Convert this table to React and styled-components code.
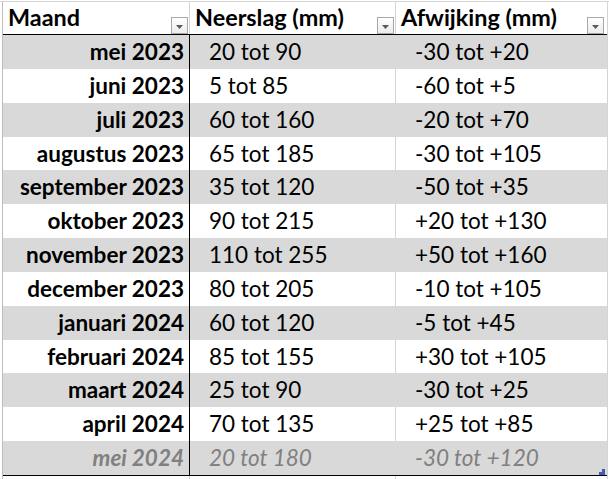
import styled, { createGlobalStyle } from "styled-components";

const rows = [
  ["mei 2023", "20 tot 90", "-30 tot +20"],
  ["juni 2023", "5 tot 85", "-60 tot +5"],
  ["juli 2023", "60 tot 160", "-20 tot +70"],
  ["augustus 2023", "65 tot 185", "-30 tot +105"],
  ["september 2023", "35 tot 120", "-50 tot +35"],
  ["oktober 2023", "90 tot 215", "+20 tot +130"],
  ["november 2023", "110 tot 255", "+50 tot +160"],
  ["december 2023", "80 tot 205", "-10 tot +105"],
  ["januari 2024", "60 tot 120", "-5 tot +45"],
  ["februari 2024", "85 tot 155", "+30 tot +105"],
  ["maart 2024", "25 tot 90", "-30 tot +25"],
  ["april 2024", "70 tot 135", "+25 tot +85"],
  ["mei 2024", "20 tot 180", "-30 tot +120", true],
];

const GlobalStyle = createGlobalStyle`
  body {
    margin: 0;
    background: #ffffff;
    font-family: Lato, "Liberation Sans", sans-serif;
  }
`;

// knopje met het filter-pijltje in de kop
function FilterButton() {
  return (
    <StyledFilter>
      <svg width="7" height="4" viewBox="0 0 7 4">
        <polygon points="0,0 7,0 3.5,4" fill="#5a5a5a" />
      </svg>
    </StyledFilter>
  );
}

export default function App() {
  return (
    <>
      <GlobalStyle />
      <Sheet>
        <Table>
          <HeaderRow>
            <HeaderCell $gridline="#d4d4d4">
              Maand
              <FilterButton />
            </HeaderCell>
            <HeaderCell $gridline="#d4d4d4">
              Neerslag (mm)
              <FilterButton />
            </HeaderCell>
            <HeaderCell $gridline="transparent">
              Afwijking (mm)
              <FilterButton />
            </HeaderCell>
          </HeaderRow>
          <Body>
            {rows.map((row, index) => {
              const striped = index % 2 === 0;
              const last = index === rows.length - 1;
              return (
                <Row key={row[0]} $striped={striped} $muted={row[3]}>
                  <MonthCell>{row[0]}</MonthCell>
                  <ValueCell $gridline={striped ? "#d9d9d9" : "#d4d4d4"}>
                    {row[1]}
                  </ValueCell>
                  <ValueCell $gridline="transparent">
                    {row[2]}
                    {last && <ResizeHandle />}
                  </ValueCell>
                </Row>
              );
            })}
          </Body>
          <Filler>
            <span />
            <span />
            <span />
          </Filler>
        </Table>
      </Sheet>
    </>
  );
}

const Sheet = styled.div`
  margin-top: 1px;
  border-top: 1px solid #d4d4d4;
  width: 609px;
  height: 477px;
  overflow: hidden;
`;

const Table = styled.div`
  margin-left: 2px;
  width: 604px;
  border-left: 1px solid #bdbdbd;
  border-right: 1px solid #d4d4d4;
`;

const HeaderRow = styled.div`
  display: grid;
  grid-template-columns: 187px 206px 210px;
  height: 32px;
  border-bottom: 1px solid #000;
`;

const HeaderCell = styled.div`
  display: flex;
  justify-content: space-between;
  align-items: flex-end;
  padding-left: 5px;
  font-size: 23.4px;
  font-weight: 700;
  line-height: 1;
  color: #000;
  border-right: 1px solid ${(p) => p.$gridline};
  padding-bottom: 5px;
  white-space: nowrap;

  & > div {
    margin-bottom: -5px;
  }
`;

const StyledFilter = styled.div`
  width: 15px;
  height: 13px;
  margin-right: 1px;
  margin-bottom: 1px;
  padding-top: 2px;
  border: 1px solid #a8a8a8;
  background: linear-gradient(#ffffff, #ececec);
  display: flex;
  align-items: center;
  justify-content: center;
  flex-shrink: 0;
`;

const Body = styled.div`
  display: flex;
  flex-direction: column;
  border-bottom: 1px solid #000;
`;

const Row = styled.div`
  display: grid;
  grid-template-columns: 187px 206px 210px;
  height: 33.85px;
  background: ${(p) => (p.$striped ? "#d9d9d9" : "#ffffff")};
  color: ${(p) => (p.$muted ? "#808080" : "#000000")};
  font-style: ${(p) => (p.$muted ? "italic" : "normal")};
  font-size: 22.5px;
  line-height: 1;
`;

const MonthCell = styled.div`
  display: flex;
  justify-content: flex-end;
  align-items: flex-start;
  padding: 6px 5px 0 0;
  font-weight: 700;
  border-right: 1px solid #000;
  white-space: nowrap;
`;

const ValueCell = styled.div`
  position: relative;
  display: flex;
  align-items: flex-start;
  padding: 6px 0 0 19px;
  border-right: 1px solid ${(p) => p.$gridline};
  white-space: nowrap;
`;

const ResizeHandle = styled.span`
  position: absolute;
  right: 0;
  bottom: 0;
  width: 6px;
  height: 6px;
  background: linear-gradient(
    to right,
    transparent 0,
    transparent 3px,
    #4759b4 3px
  );

  &::after {
    content: "";
    position: absolute;
    left: 0;
    bottom: 0;
    width: 3px;
    height: 3px;
    background: #4759b4;
  }
`;

const Filler = styled.div`
  display: grid;
  grid-template-columns: 187px 206px 210px;
  height: 4px;

  & > span {
    border-right: 1px solid #d4d4d4;
  }
  & > span:last-child {
    border-right: none;
  }
`;
